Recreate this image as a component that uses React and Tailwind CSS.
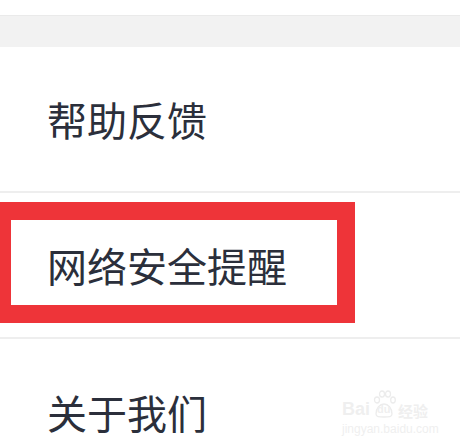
import React from "react";

const items = ["帮助反馈", "网络安全提醒", "关于我们"];

export default function App() {
  return (
    <div
      className="relative w-[460px] h-[446px] overflow-hidden bg-white"
      style={{ fontFamily: '"Noto Sans CJK SC", "Noto Sans", sans-serif' }}
    >
      <div className="h-[15px] bg-white" />
      <div className="h-[32px] bg-[#f2f2f2] border-t border-[#eaeaea]" />

      <div className="flex flex-col">
        {items.map((label, i) => (
          <div
            key={label}
            className={
              i < items.length - 1
                ? "h-[146px] flex items-center pl-[47px] border-b-2 border-[#eeeeee]"
                : "h-[146px] flex items-center pl-[47px]"
            }
          >
            <span className="text-[40px] leading-none text-[#2b2f3b]">
              {label}
            </span>
          </div>
        ))}
      </div>

      {/* red highlight frame */}
      <div className="absolute left-0 top-[202px] w-[355px] h-[121px] border-[#ee3439] border-t-[18px] border-b-[18px] border-l-[11px] border-r-[18px]" />

      {/* faint watermark */}
      <div className="absolute left-[342px] top-[390px] flex flex-col items-start text-[#efefef]">
        <div className="flex items-end">
          <span
            className="text-[18px] font-bold leading-none"
            style={{ fontFamily: '"Liberation Sans", sans-serif' }}
          >
            Bai
          </span>
          <span className="relative ml-[2px] w-[24px] h-[28px]">
            <svg width="24" height="28" viewBox="0 0 24 28" className="absolute left-0 top-0">
              <g fill="none" stroke="#ececec" strokeWidth="1.3">
                <ellipse cx="5" cy="10" rx="2.5" ry="3" />
                <ellipse cx="10" cy="4" rx="2.5" ry="3" />
                <ellipse cx="16" cy="4" rx="2.5" ry="3" />
                <ellipse cx="21" cy="10" rx="2.3" ry="3" />
                <path d="M4 24 C4 18 8 14 12 14 C16 14 20 18 20 24 C20 27 17 27 12 27 C7 27 4 27 4 24 Z" />
              </g>
            </svg>
            <span
              className="absolute left-[5px] top-[14px] text-[11px] font-bold leading-none"
              style={{ fontFamily: '"Liberation Sans", sans-serif' }}
            >
              du
            </span>
          </span>
          <span className="ml-[2px] text-[15px] leading-none font-bold">经验</span>
        </div>
        <span
          className="mt-[5px] text-[12px] leading-none"
          style={{ fontFamily: '"Liberation Sans", sans-serif' }}
        >
          jingyan.baidu.com
        </span>
      </div>
    </div>
  );
}
